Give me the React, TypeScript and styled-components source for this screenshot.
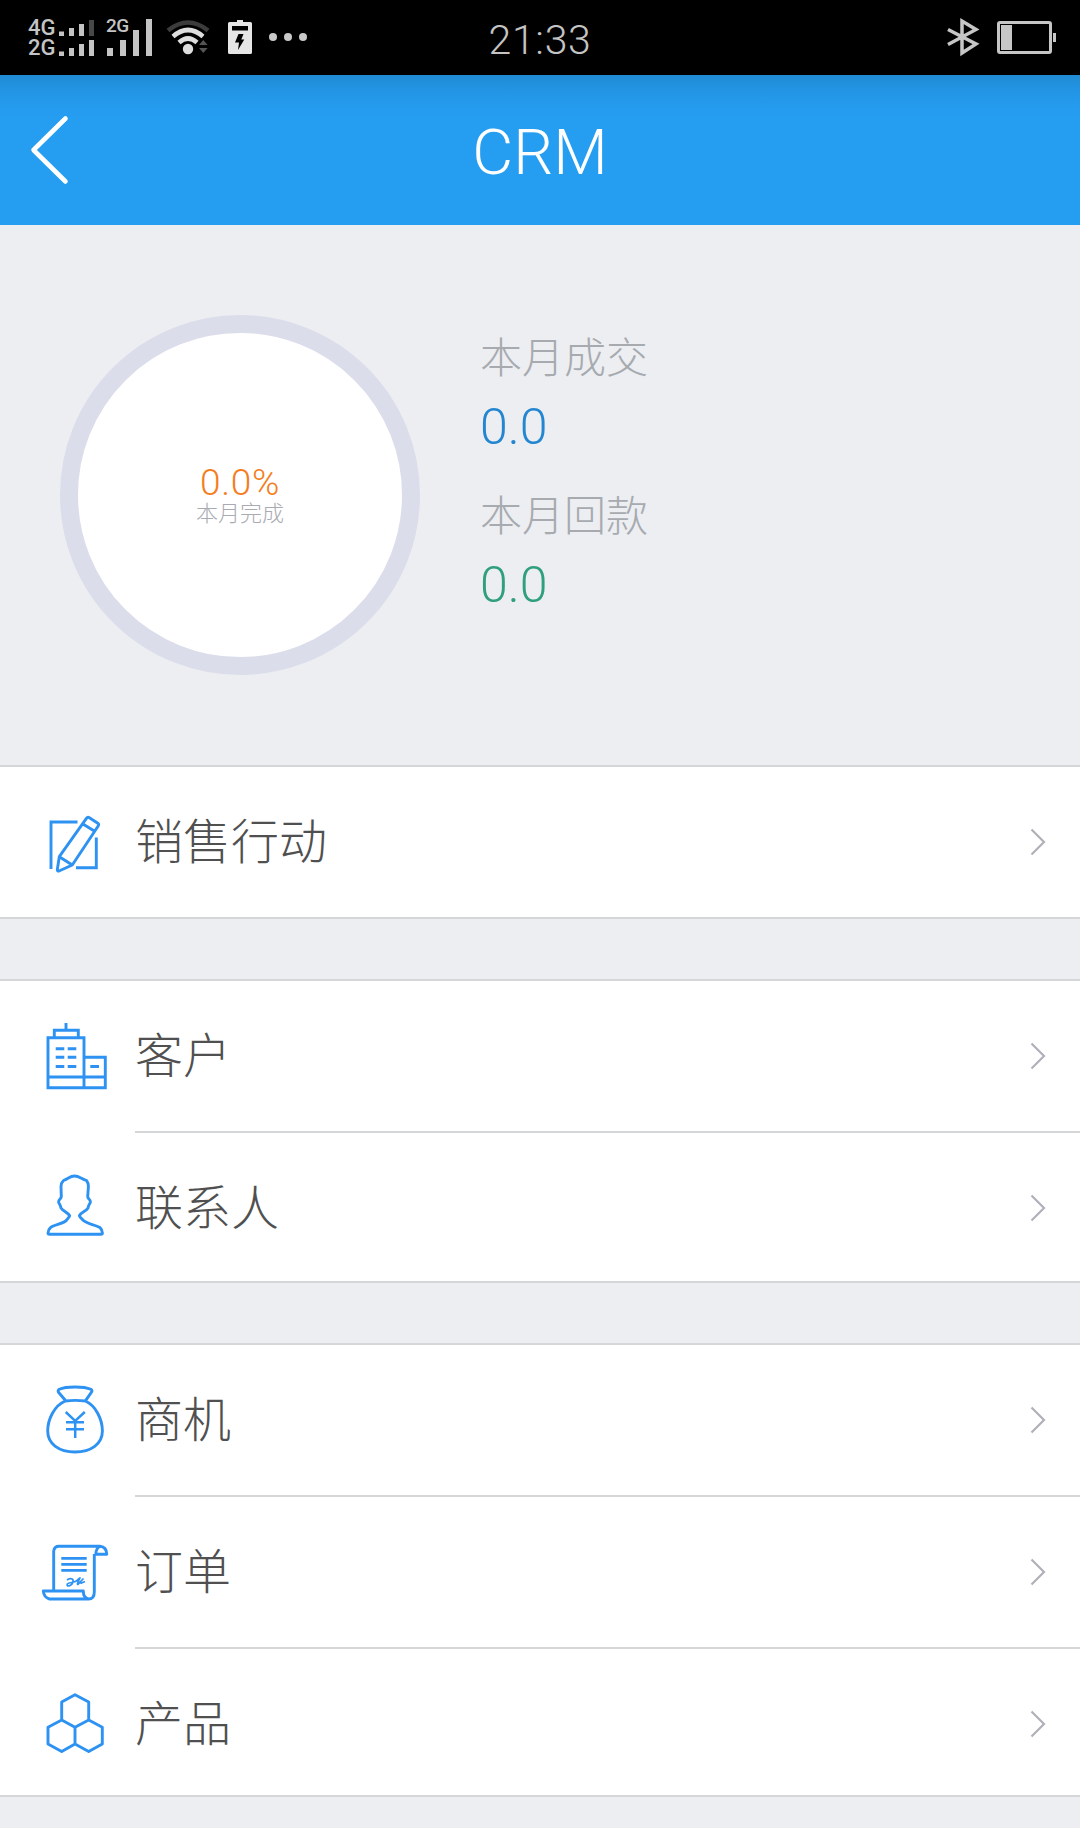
import React from 'react';
import styled, { createGlobalStyle } from 'styled-components';

const GlobalStyle = createGlobalStyle`
  * { box-sizing: border-box; }
  body { margin: 0; background: #eceef2; }
  svg { display: block; flex: none; }
`;

const Screen = styled.div`
  width: 1080px;
  height: 1828px;
  overflow: hidden;
  background: #eceef2;
  font-family: Roboto, 'Noto Sans CJK SC', sans-serif;
  font-weight: 300;
`;

const StatusBar = styled.header`
  height: 75px;
  background: #000;
  color: #c4c4c4;
  display: grid;
  grid-template-columns: 1fr auto 1fr;
  align-items: start;
`;

const StatusLeft = styled.div`
  display: flex;
  padding-left: 28px;
`;

const StatusRight = styled.div`
  display: flex;
  justify-content: flex-end;
`;

const Networks = styled.div`
  display: flex;
  flex-direction: column;
  width: 31px;
  padding-top: 18px;
`;

const Network = styled.span<{ $small?: boolean }>`
  font-family: Roboto, sans-serif;
  font-weight: 500;
  font-size: ${(p) => (p.$small ? 19 : 22)}px;
  line-height: 20px;
  height: 20px;
  letter-spacing: ${(p) => (p.$small ? -0.5 : 0)}px;
`;

const SecondSim = styled.div`
  display: flex;
  width: 50px;
  padding: 16px 0 0 9px;
`;

const Overlap = styled.div`
  display: grid;
  & > * { grid-area: 1 / 1; }
`;

const Clock = styled.time`
  font-size: 41px;
  line-height: 48px;
  padding-top: 16px;
  font-weight: 300;
  letter-spacing: 0.7px;
`;

const TitleBar = styled.nav`
  height: 150px;
  display: grid;
  grid-template-columns: 100px 1fr 100px;
  align-items: center;
  background: linear-gradient(#208bd3 0, #2293e2 13px, #259bee 30px, #259df1 44px);
`;

const BackButton = styled.button`
  border: 0;
  padding: 0 0 0 28px;
  background: none;
`;

const Title = styled.h1`
  margin: 0;
  padding-top: 6px;
  text-align: center;
  color: #fff;
  font-size: 63px;
  line-height: 74px;
  font-weight: 300;
`;

const Summary = styled.section`
  height: 540px;
  display: flex;
  padding: 90px 60px 0;
  gap: 60px;
`;

const Gauge = styled.div`
  width: 360px;
  height: 360px;
  border: 18px solid #dcddeb;
  border-radius: 50%;
  background: #fff;
  display: flex;
  flex-direction: column;
  align-items: center;
  padding-top: 131px;
`;

const GaugeValue = styled.span`
  font-size: 37px;
  line-height: 38px;
  color: #f47d20;
  letter-spacing: 0.7px;
`;

const GaugeLabel = styled.span`
  font-size: 22px;
  line-height: 24px;
  color: #a9abb2;
`;

const Stats = styled.dl`
  margin: 0;
  padding-top: 14px;
`;

const StatLabel = styled.dt`
  font-size: 42px;
  line-height: 60px;
  height: 60px;
  color: #a7aaaf;
`;

const StatValue = styled.dd<{ $color: string }>`
  margin: 0 0 22px;
  padding-top: 8px;
  height: 76px;
  font-size: 50px;
  line-height: 60px;
  color: ${(p) => p.$color};
`;

const Group = styled.section`
  background: #fff;
  border: solid #d5d6d8;
  border-width: 2px 0;
  margin-bottom: 60px;
`;

const Row = styled.div<{ $height: number }>`
  height: ${(p) => p.$height}px;
  display: flex;
  align-items: flex-start;
  padding-left: 40px;
`;

const IconSlot = styled.div`
  width: 95px;
  padding-top: 25px;
`;

const RowBody = styled.div<{ $divided: boolean }>`
  flex: 1;
  height: 100%;
  display: flex;
  justify-content: space-between;
  padding-right: 34px;
  border-bottom: ${(p) => (p.$divided ? '2px solid #d5d6d8' : '0')};
`;

const RowLabel = styled.span`
  font-size: 48px;
  line-height: 70px;
  padding-top: 41px;
  color: #505050;
`;

const ChevronSlot = styled.span`
  padding-top: 60px;
`;

const BLUE = '#2d92f2';

const Icon = ({ children }: { children: React.ReactNode }) => (
  <svg width="70" height="100" viewBox="0 0 70 100" fill="none" stroke={BLUE} strokeWidth="2.9" strokeLinejoin="round">
    {children}
  </svg>
);

const icons = {
  action: (
    <Icon>
      <path strokeLinejoin="miter" d="M11 77V30H37.5M56.3 45.5V75.7H36" />
      <path d="M19.3 64.7L46.6 26.2Q47.7 24.7 49.4 25.8L57.8 31.3Q59.4 32.4 58.2 34L32.3 73L19 79Q17.3 79.4 17.3 77.6ZM19.3 64.7L32.3 73M43.3 32.3L54.7 39.3" />
    </Icon>
  ),
  customer: (
    <Icon>
      <path strokeLinejoin="miter" d="M8 31.7H44V81.7H8ZM14.3 31V24.3H38.3V31M26 17V24.3M44 51.3H65.3V81.7H44M8 71H65.3" />
      <path d="M15.7 42.7H24.3M27.7 42.7H36.3M15.7 51.3H24.3M27.7 51.3H36.3M15.7 60.5H24.3M27.7 60.5H36.3M50.3 60.5H59" />
    </Icon>
  ),
  contact: (
    <Icon>
      <path d="M34.5 18C30 18 28.5 20.5 23.5 22.5Q21 25 21 28.5L21.3 38.5C21 41.5 18.5 41 18.6 44C19 46 20.5 46.5 21 50C23.5 53.5 27 53.5 29.7 57.7Q29 59.5 27 61.5C25 65.5 15 66.5 10.5 69.6C8 71.8 8 73.5 8 75Q8 76.2 9.5 76.2H61Q62.4 76.2 62.4 75C62.4 73.5 62.4 71.8 60 69.6C55 66.5 45 65.5 42.5 61.5Q40 59.5 39.4 57.7C41.5 53.5 46 53.5 48 50C48.5 46.5 50 46 50.4 44C50.5 41 48 41.5 47.7 38.5L48.4 28.5Q48.4 25 46.5 22.5C41 20.5 39 18 34.5 18Z" />
    </Icon>
  ),
  money: (
    <Icon>
      <path d="M25.3 30.3L18.5 22.2Q17.4 20.4 19.3 19.3C26 16.2 44 16.2 50.8 19.3Q52.6 20.4 51.5 22.2L45.4 30.8M25.3 31Q35 29.8 45.4 31C55.5 35.5 62.4 49 62.4 61C62.4 74 51 82 35 82C19 82 7.7 74 7.7 61C7.7 49 14.5 35.5 25.3 31Z" />
      <path strokeWidth="2.5" d="M25.7 42L35.2 50.8L44.8 42M26 52.3H44M26 59.2H44M35.2 51V68" />
    </Icon>
  ),
  order: (
    <Icon>
      <path d="M13.7 69V29Q14.4 24.3 19 24.3H60Q66.6 25 66.8 32.3H55.8Q56 26 60 24.5M54.3 32V70Q54.3 77 48.5 77Q43.3 76 43.3 69H3.3Q3.8 75.5 9.5 77H48.5" />
      <path d="M21.3 36.4H46.7M21.3 42.4H46.7M21.3 48.4H46.7" />
      <path strokeWidth="1.7" d="M27 58C30 55.5 34 56.5 33 60C31.5 64.5 26 65 27.3 62C29 60 35 61 37.5 58L40 55.8C38.5 59 36.5 63 38 62.4L43.5 56.5M38 62C41 58.5 40 62 41.5 61L45 59.5" />
    </Icon>
  ),
  product: (
    <Icon>
      <path d="M35 20.7L48.7 28V46L35 53.3L21.7 46V28ZM21.7 46L8 53.3V70L21.7 77.6L35 70V53.3M48.7 46L62.3 53.3V70L48.7 77.6L35 70" />
    </Icon>
  ),
};

type IconName = keyof typeof icons;

const groups: { icon: IconName; label: string; height: number }[][] = [
  [{ icon: 'action', label: '销售行动', height: 150 }],
  [
    { icon: 'customer', label: '客户', height: 152 },
    { icon: 'contact', label: '联系人', height: 148 },
  ],
  [
    { icon: 'money', label: '商机', height: 152 },
    { icon: 'order', label: '订单', height: 152 },
    { icon: 'product', label: '产品', height: 146 },
  ],
];

const SignalPair = () => (
  <svg width="38" height="75" viewBox="59 0 38 75" fill="#c4c4c4">
    <path d="M59 31.5h5v4.5h-5zM69 28h5v8h-5zM79 24h5v12h-5zM59 51.5h5v4.5h-5zM69 48h5v8h-5zM79 44h5v12h-5zM89 40h5v16h-5z" />
    <path fill="#484848" d="M89 20h5v16h-5z" />
  </svg>
);

const StatusIcons = () => (
  <svg width="154" height="75" viewBox="156 0 154 75" fill="none">
    <g strokeWidth="4.6">
      <path stroke="#3c3c3c" d="M168 30.5Q188 14.5 208 30.5" />
      <path stroke="#dedede" d="M173 36.5Q188 23.5 203 36.5" />
      <path stroke="#dedede" d="M179 42.5Q188 34.5 197 42.5" />
    </g>
    <circle cx="188" cy="49" r="5.2" fill="#dedede" />
    <path fill="#555" d="M199 45l4.3-5 4.3 5zM199 48h8.6l-4.3 5z" />
    <path fill="#e6e6e6" d="M237 20h6v2h7.500q1.500 0 1.500 1.500v29q0 1.500-1.500 1.500h-21q-1.500 0-1.500-1.500v-29q0-1.500 1.500-1.500h7.500z" />
    <path fill="#000" d="M232 26h16v4.500h-16zM238.500 34h5l-2.200 5.500h3l-6.300 10.500 1-7.500h-4z" />
    <g fill="#c9c9c9">
      <circle cx="273" cy="37" r="4" />
      <circle cx="288" cy="37" r="4" />
      <circle cx="303" cy="37" r="4" />
    </g>
  </svg>
);

const Chevron = () => (
  <svg width="18" height="30" viewBox="0 0 18 30" fill="none" stroke="#b0b1b9" strokeWidth="2.2">
    <path d="M3.500 2.500L16 15L3.500 27.500" />
  </svg>
);

export default function App() {
  return (
    <Screen>
      <GlobalStyle />
      <StatusBar>
        <StatusLeft>
          <Networks>
            <Network>4G</Network>
            <Network>2G</Network>
          </Networks>
          <SignalPair />
          <Overlap>
            <SecondSim>
              <Network $small>2G</Network>
            </SecondSim>
            <svg width="59" height="75" viewBox="97 0 59 75" fill="#c4c4c4">
              <path d="M107 48h6v8h-6zM120 40h6v16h-6zM133 30h6v26h-6zM146 19h6v37h-6z" />
            </svg>
          </Overlap>
          <StatusIcons />
        </StatusLeft>
        <Clock>21:33</Clock>
        <StatusRight>
          <svg width="140" height="75" viewBox="940 0 140 75" fill="none" stroke="#c6c6c6">
            <path strokeWidth="3.500" d="M948 29.500L976 44L962 53V21L976 29.500L948 44.500" />
            <rect x="998.500" y="22.500" width="52" height="30" rx="1.500" strokeWidth="3" />
            <path fill="#c6c6c6" stroke="none" d="M1001 25h11v25h-11zM1053 33h3v9h-3z" />
          </svg>
        </StatusRight>
      </StatusBar>
      <TitleBar>
        <BackButton aria-label="back">
          <svg width="44" height="72" viewBox="0 0 44 72" fill="none" stroke="#fff" strokeWidth="4.600" strokeLinecap="round" strokeLinejoin="round">
            <path d="M37.500 4.500L5.500 36L37.500 67.500" />
          </svg>
        </BackButton>
        <Title>CRM</Title>
      </TitleBar>
      <Summary>
        <Gauge>
          <GaugeValue>0.0%</GaugeValue>
          <GaugeLabel>本月完成</GaugeLabel>
        </Gauge>
        <Stats>
          <StatLabel>本月成交</StatLabel>
          <StatValue $color="#2486d0">0.0</StatValue>
          <StatLabel>本月回款</StatLabel>
          <StatValue $color="#2f9f7c">0.0</StatValue>
        </Stats>
      </Summary>
      {groups.map((rows, g) => (
        <Group key={g}>
          {rows.map((row, i) => (
            <Row key={row.icon} $height={row.height}>
              <IconSlot>{icons[row.icon]}</IconSlot>
              <RowBody $divided={i < rows.length - 1}>
                <RowLabel>{row.label}</RowLabel>
                <ChevronSlot>
                  <Chevron />
                </ChevronSlot>
              </RowBody>
            </Row>
          ))}
        </Group>
      ))}
    </Screen>
  );
}
